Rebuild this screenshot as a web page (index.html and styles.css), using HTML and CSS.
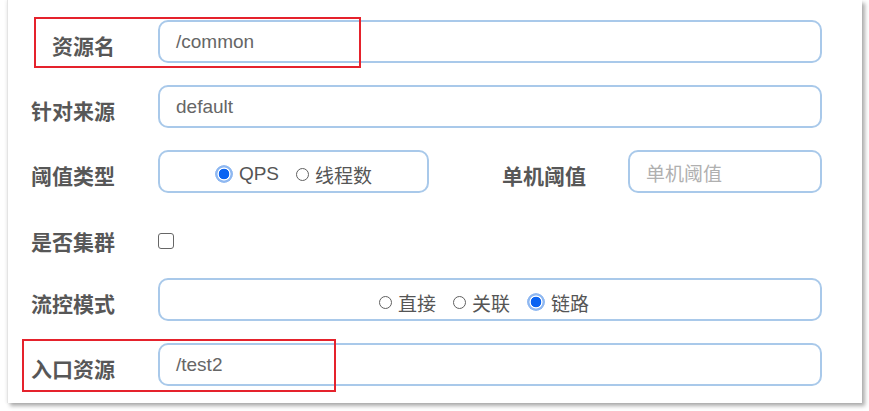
FILE: index.html
```html
<!DOCTYPE html>
<html lang="zh-CN">
<head>
<meta charset="utf-8">
<title>流控规则</title>
<link rel="stylesheet" href="styles.css">
</head>
<body>
<div class="card">
  <form class="form">
    <div class="row">
      <label class="label">资源名</label>
      <div class="field"><span class="value">/common</span></div>
    </div>
    <div class="row">
      <label class="label">针对来源</label>
      <div class="field"><span class="value">default</span></div>
    </div>
    <div class="row">
      <label class="label">阈值类型</label>
      <div class="field radios narrow">
        <span class="opt"><span class="radio on"></span><span class="txt">QPS</span></span>
        <span class="opt"><span class="radio"></span><span class="txt">线程数</span></span>
      </div>
      <label class="label inner">单机阈值</label>
      <div class="field small"><span class="placeholder">单机阈值</span></div>
    </div>
    <div class="row check-row">
      <label class="label">是否集群</label>
      <span class="checkbox"></span>
    </div>
    <div class="row">
      <label class="label">流控模式</label>
      <div class="field radios wide">
        <span class="opt"><span class="radio"></span><span class="txt">直接</span></span>
        <span class="opt"><span class="radio"></span><span class="txt">关联</span></span>
        <span class="opt"><span class="radio on"></span><span class="txt">链路</span></span>
      </div>
    </div>
    <div class="row last">
      <label class="label">入口资源</label>
      <div class="field"><span class="value">/test2</span></div>
    </div>
  </form>
  <div class="mark mark-1"></div>
  <div class="mark mark-2"></div>
</div>
</body>
</html>
```

FILE: styles.css
```css
html, body {
  margin: 0;
  padding: 0;
  background: #ffffff;
}

body {
  width: 869px;
  height: 411px;
  overflow: hidden;
  font-family: "Liberation Sans", "Noto Sans CJK SC", sans-serif;
}

.card {
  position: relative;
  margin-left: 7px;
  width: 854px;
  height: 403px;
  background: #ffffff;
  border-left: 1px solid #e4e4e4;
  box-shadow: 3px 3px 4px rgba(0, 0, 0, 0.32), -1px 0 3px rgba(0, 0, 0, 0.06);
}

.form {
  display: flex;
  flex-direction: column;
  gap: 22px;
  padding: 20px 40px 0 0;
}

.row {
  display: flex;
  align-items: center;
  height: 43px;
}

.label {
  flex: none;
  width: 107px;
  margin-right: 43px;
  padding-top: 6px;
  text-align: right;
  font-family: "Noto Sans CJK SC", sans-serif;
  font-weight: bold;
  font-size: 21px;
  line-height: 28px;
  color: #575757;
  white-space: nowrap;
}

.label.inner {
  flex: 1;
  width: auto;
  margin-right: 42px;
}

.field {
  flex: 1;
  box-sizing: border-box;
  height: 43px;
  display: flex;
  align-items: center;
  padding-left: 16px;
  border: 2px solid #a9c9ea;
  border-radius: 10px;
  background: #ffffff;
  font-size: 19px;
  color: #666666;
}

.value {
  font-family: "Liberation Sans", "Noto Sans CJK SC", sans-serif;
  padding-top: 1px;
}

.placeholder {
  font-family: "Noto Sans CJK SC", sans-serif;
  color: #b0b0b0;
  font-size: 19px;
  padding-top: 2px;
}

.field.narrow {
  flex: none;
  width: 271px;
}

.field.small {
  flex: none;
  width: 194px;
}

.radios {
  justify-content: center;
  padding-left: 0;
  padding-top: 5px;
  gap: 17px;
}

.field.wide {
  padding-right: 12px;
  gap: 17px;
}

.opt {
  display: flex;
  align-items: center;
  gap: 6px;
}

.txt {
  font-family: "Liberation Sans", "Noto Sans CJK SC", sans-serif;
  font-size: 19px;
  color: #555555;
}

.radio {
  display: inline-block;
  box-sizing: border-box;
  width: 13px;
  height: 13px;
  border: 1.3px solid #606060;
  border-radius: 50%;
  background: #ffffff;
}

.radio.on {
  width: 18px;
  height: 18px;
  border: none;
  background: radial-gradient(circle, #0a63f2 0 5px, #ffffff 5.6px 6.2px, #8fb8f1 6.8px 9px, transparent 9.1px);
}

.check-row {
  height: 41px;
  padding-top: 5px;
  box-sizing: border-box;
}

.checkbox {
  display: inline-block;
  box-sizing: border-box;
  width: 16px;
  height: 16px;
  margin-top: 6px;
  border: 1.5px solid #666666;
  border-radius: 3px;
  background: #ffffff;
}

.mark {
  position: absolute;
  box-sizing: border-box;
  border: 2px solid #e5222c;
}

.mark-1 {
  left: 26px;
  top: 17px;
  width: 327px;
  height: 51px;
}

.mark-2 {
  left: 14px;
  top: 339px;
  width: 314px;
  height: 53px;
}
```
